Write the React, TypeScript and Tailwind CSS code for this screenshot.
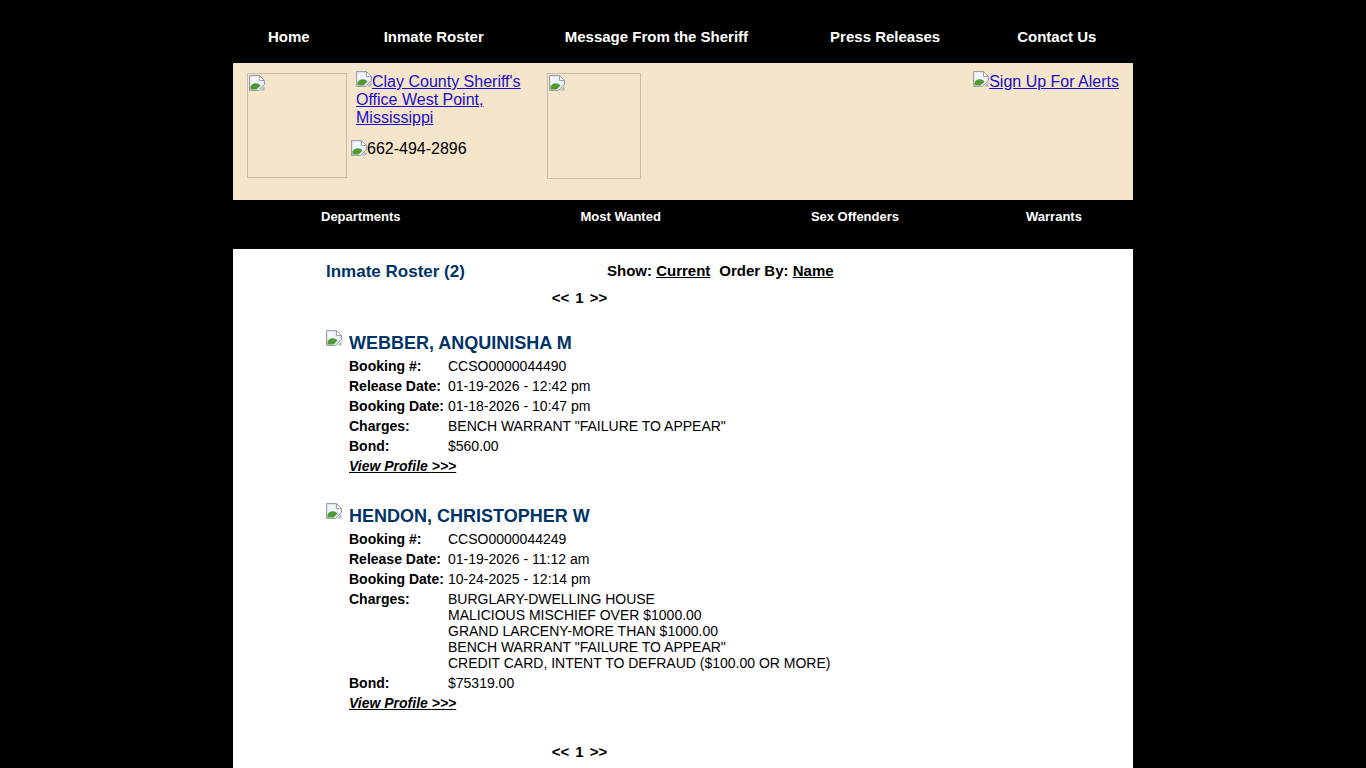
const BrokenImage = () => (
  <svg width="16" height="16" viewBox="0 0 16 16" className="shrink-0 inline-block align-baseline">
    <path d="M0.5 0.5H10.5L15.5 5.5V9.5L9.5 15.5H0.5Z" fill="#dfe6f2" stroke="#9ca1a8" />
    <path d="M10.5 0.5V5.5H15.5Z" fill="#fff" stroke="#9ca1a8" />
    <path d="M2 2H9.5V6.5H14V9L11 11.5C8 7 4.5 7 2 10Z" fill="#f2f5fa" />
    <path d="M1.5 14.5V11.5C4 7.5 8.5 7.5 11.5 10.5L7.5 14.5Z" fill="#4f9a32" />
    <path d="M11 15.5L15.5 11V15.5Z" fill="#9ca1a8" opacity="0.7" />
  </svg>
);

type Inmate = {
  name: string;
  booking: string;
  release: string;
  bookingDate: string;
  charges: string[];
  bond: string;
};

const inmates: Inmate[] = [
  {
    name: "WEBBER, ANQUINISHA M",
    booking: "CCSO0000044490",
    release: "01-19-2026 - 12:42 pm",
    bookingDate: "01-18-2026 - 10:47 pm",
    charges: ['BENCH WARRANT "FAILURE TO APPEAR"'],
    bond: "$560.00",
  },
  {
    name: "HENDON, CHRISTOPHER W",
    booking: "CCSO0000044249",
    release: "01-19-2026 - 11:12 am",
    bookingDate: "10-24-2025 - 12:14 pm",
    charges: [
      "BURGLARY-DWELLING HOUSE",
      "MALICIOUS MISCHIEF OVER $1000.00",
      "GRAND LARCENY-MORE THAN $1000.00",
      'BENCH WARRANT "FAILURE TO APPEAR"',
      "CREDIT CARD, INTENT TO DEFRAUD ($100.00 OR MORE)",
    ],
    bond: "$75319.00",
  },
];

const Row = ({ label, children }: { label: string; children: React.ReactNode }) => (
  <div className="flex py-[2px]">
    <div className="w-[99px] shrink-0 font-bold leading-4">{label}</div>
    <div className="leading-4">{children}</div>
  </div>
);

const Pager = () => (
  <div className="w-[507px] text-center text-[15px] font-bold leading-4 text-black [word-spacing:2px]">
    {"<<"} 1 {">>"}
  </div>
);

function InmateCard({ inmate }: { inmate: Inmate }) {
  return (
    <div className="flex">
      <div className="w-[23px] shrink-0 -mt-[1px]">
        <BrokenImage />
      </div>
      <div className="text-[14px] text-black">
        <h2 className="text-[18px] font-bold leading-[22px] text-[#003366] mt-[2px] mb-[2px]">{inmate.name}</h2>
        <Row label="Booking #:">{inmate.booking}</Row>
        <Row label="Release Date:">{inmate.release}</Row>
        <Row label="Booking Date:">{inmate.bookingDate}</Row>
        <Row label="Charges:">
          {inmate.charges.map((c) => (
            <div key={c}>{c}</div>
          ))}
        </Row>
        <Row label="Bond:">{inmate.bond}</Row>
        <a href="#" className="block py-[2px] font-bold italic underline leading-4 text-black">
          View Profile {">>>"}
        </a>
      </div>
    </div>
  );
}

export default function App() {
  return (
    <div className="min-h-screen bg-black font-['Liberation_Sans',Arial,sans-serif]">
      <div className="mx-auto w-[900px] h-[768px] overflow-hidden">
        <nav className="h-[63px] flex pt-[28px] text-[15px] font-bold leading-[18px] text-white">
          <a href="#" className="ml-[35px]">Home</a>
          <a href="#" className="ml-[74px]">Inmate Roster</a>
          <a href="#" className="ml-[81px]">Message From the Sheriff</a>
          <a href="#" className="ml-[82px]">Press Releases</a>
          <a href="#" className="ml-[77px]">Contact Us</a>
        </nav>

        <header className="h-[137px] bg-[#f5e6cb] flex text-[16px] leading-[18px] text-black">
          <div className="ml-[14px] mt-[10px] w-[100px] h-[105px] border border-[#c8bdaa] p-[1px] shrink-0">
            <BrokenImage />
          </div>
          <div className="ml-[4px] w-[196px] shrink-0">
            <div className="mt-[8px] ml-[5px] w-[180px]">
              <a href="#" className="text-[#1a0dcc] underline">
                <BrokenImage />Clay County Sheriff's Office West Point, Mississippi
              </a>
            </div>
            <div className="mt-[13px] flex items-start leading-[18px]">
              <BrokenImage />
              <span>662-494-2896</span>
            </div>
          </div>
          <div className="mt-[10px] w-[94px] h-[106px] border border-[#c8bdaa] p-[1px] shrink-0">
            <BrokenImage />
          </div>
          <div className="ml-auto mr-[14px] mt-[8px]">
            <a href="#" className="text-[#1a0dcc] underline">
              <BrokenImage />Sign Up For Alerts
            </a>
          </div>
        </header>

        <nav className="h-[49px] flex pt-[9px] text-[13px] font-bold leading-[15px] text-white">
          <a href="#" className="ml-[88px]">Departments</a>
          <a href="#" className="ml-[180px]">Most Wanted</a>
          <a href="#" className="ml-[150px]">Sex Offenders</a>
          <a href="#" className="ml-[127px]">Warrants</a>
        </nav>

        <main className="bg-white h-[519px] pl-[93px] pt-[13px]">
          <div className="flex items-center h-[18px]">
            <h1 className="w-[281px] text-[17px] font-bold text-[#003366] translate-y-[1px]">Inmate Roster (2)</h1>
            <div className="text-[15px] font-bold text-black">
              Show: <a href="#" className="underline">Current</a>
              <span className="ml-[9px]">Order By: </span>
              <a href="#" className="underline">Name</a>
            </div>
          </div>
          <div className="mt-[10px]"><Pager /></div>
          <div className="mt-[24px]"><InmateCard inmate={inmates[0]} /></div>
          <div className="mt-[27px]"><InmateCard inmate={inmates[1]} /></div>
          <div className="mt-[31px]"><Pager /></div>
        </main>
      </div>
    </div>
  );
}
